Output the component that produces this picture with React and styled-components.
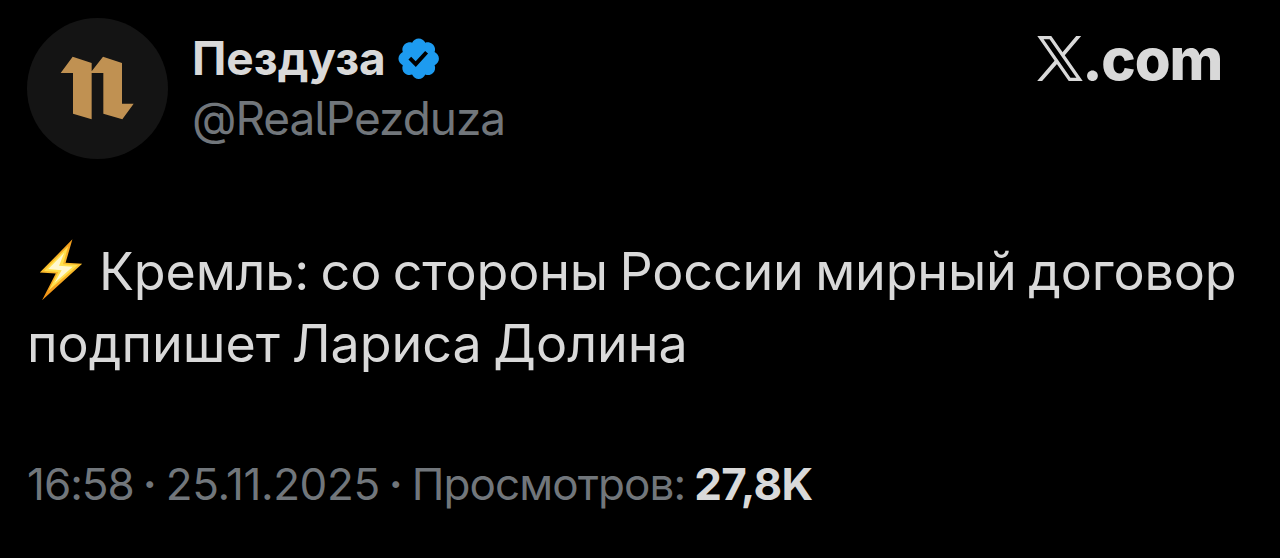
import React from "react";
import styled, { createGlobalStyle } from "styled-components";

const App = () => {
  return (
    <>
      <GlobalStyle />
      <StPost>
        <StHeader>
          <StAvatar>
            <AvatarLetter />
          </StAvatar>
          <StUser>
            <StNameRow>
              <StName>Пездуза</StName>
              <VerifiedBadge />
            </StNameRow>
            <StHandle>@RealPezduza</StHandle>
          </StUser>
          <StBrand>
            <XLogo />
            <StDomain>.com</StDomain>
          </StBrand>
        </StHeader>

        <StText>
          <StLine $spacing='-0.14px'>
            <Bolt />
            Кремль: со стороны России мирный договор
          </StLine>
          <StLine $spacing='0px'>подпишет Лариса Долина</StLine>
        </StText>

        <StMeta>
          <StMuted $spacing='-1px'>16:58</StMuted>
          <StDot>·</StDot>
          <StMuted $spacing='-0.4px'>25.11.2025</StMuted>
          <StDot>·</StDot>
          <StMuted $spacing='-0.9px'>Просмотров:</StMuted>
          <StViews>27,8K</StViews>
        </StMeta>
      </StPost>
    </>
  );
};

const AvatarLetter = () => (
  <StLetter viewBox='0 0 222 192'>
    <path
      fill='#c09152'
      d='M2 51 L38 2 L95 21 V46 L129 2 L186 21 V143 L221 143 L187 190 L130 173 V51 H95 V190 L39 173 V51 Z'
    />
  </StLetter>
);

const VerifiedBadge = () => (
  <StBadge viewBox='0 0 22 22'>
    <path
      fill='#1d9bf0'
      d='M20.396 11c-.018-.646-.215-1.275-.57-1.816-.354-.54-.852-.972-1.438-1.246.223-.607.27-1.264.14-1.897-.131-.634-.437-1.218-.882-1.687-.47-.445-1.053-.75-1.687-.882-.633-.13-1.29-.083-1.897.14-.273-.587-.704-1.086-1.245-1.44S11.647 1.62 11 1.604c-.646.017-1.273.213-1.813.568s-.969.854-1.24 1.44c-.608-.223-1.267-.272-1.902-.14-.635.13-1.22.436-1.69.882-.445.47-.749 1.055-.878 1.688-.13.633-.08 1.29.144 1.896-.587.274-1.087.705-1.443 1.245-.356.54-.555 1.17-.574 1.817.02.647.218 1.276.574 1.817.356.54.856.972 1.443 1.245-.224.606-.274 1.263-.144 1.896.13.634.433 1.218.877 1.688.47.443 1.054.747 1.687.878.633.132 1.29.084 1.897-.136.274.586.705 1.084 1.246 1.439.54.354 1.17.551 1.816.569.647-.016 1.276-.213 1.817-.567s.972-.854 1.245-1.44c.604.239 1.266.296 1.903.164.636-.132 1.22-.447 1.68-.907.46-.46.776-1.044.908-1.681s.075-1.299-.165-1.903c.586-.274 1.084-.705 1.439-1.246.354-.54.551-1.17.569-1.816zM9.662 14.85l-3.429-3.428 1.293-1.302 2.072 2.072 4.4-4.794 1.347 1.246z'
    />
  </StBadge>
);

const XLogo = () => (
  <StXLogo viewBox='0 0 138 136'>
    <path
      fill='none'
      stroke='#d9d9d9'
      strokeWidth='10'
      d='M10 5 H40 L128 131 H98 Z'
    />
    <path
      fill='#d9d9d9'
      d='M118 0 H133 L81 61 L74 52 Z M0 136 L55 72 L62 82 L15 136 Z'
    />
  </StXLogo>
);

const Bolt = () => (
  <StBolt viewBox='0 0 132 190'>
    <defs>
      <linearGradient id='bolt' x1='0' y1='0' x2='0' y2='1'>
        <stop offset='0' stopColor='#f39a1a' />
        <stop offset='0.45' stopColor='#fbc02d' />
        <stop offset='1' stopColor='#f08c12' />
      </linearGradient>
    </defs>
    <path fill='url(#bolt)' d='M101 1 L1 103 L50 106 L8 188 L131 76 L80 73 Z' />
    <path fill='#ffe14d' d='M88 22 L14 98 L58 101 L28 158 L118 80 L72 77 Z' />
    <path fill='#fff8cf' d='M76 42 L27 92 L68 96 L46 135 L102 85 L60 82 Z' />
  </StBolt>
);

export default App;

const GlobalStyle = createGlobalStyle`
  body {
    margin: 0;
    background: #000;
    font-family: Inter, "Liberation Sans", sans-serif;
  }
`;

const StPost = styled.div`
  height: 558px;
  padding: 18px 28px 0 27px;
  box-sizing: border-box;
  color: #d9d9d9;
  white-space: nowrap;
`;

const StHeader = styled.div`
  height: 217px;
  display: flex;
  align-items: flex-start;
`;

const StAvatar = styled.div`
  width: 141px;
  height: 141px;
  border-radius: 50%;
  background: #141414;
  display: flex;
  align-items: center;
  justify-content: center;
`;

const StLetter = styled.svg`
  width: 74px;
  height: 64px;
  margin: 0 2px 1px 0;
`;

const StUser = styled.div`
  margin-left: 24px;
  padding-top: 11px;
`;

const StNameRow = styled.div`
  height: 59px;
  display: flex;
  align-items: center;
`;

const StName = styled.div`
  font-size: 46px;
  font-weight: 700;
  line-height: 59px;
`;

const StBadge = styled.svg`
  width: 47.4px;
  height: 47.4px;
  margin-left: 9px;
`;

const StHandle = styled.div`
  color: #71767b;
  font-size: 46px;
  line-height: 60px;
  letter-spacing: -1.05px;
  font-feature-settings: "cv05";
`;

const StBrand = styled.div`
  margin-left: auto;
  margin-right: 30px;
  padding-top: 18px;
  display: flex;
`;

const StXLogo = styled.svg`
  width: 46px;
  height: 45px;
`;

const StDomain = styled.div`
  margin-left: -1px;
  font-size: 58px;
  font-weight: 800;
  line-height: 47px;
  letter-spacing: -1.2px;
`;

const StText = styled.div`
  font-size: 52px;
  line-height: 73px;
  word-spacing: -3px;
`;

const StLine = styled.div`
  height: 72px;
  display: flex;
  align-items: center;
  letter-spacing: ${(props) => props.$spacing};
`;

const StBolt = styled.svg`
  width: 44px;
  height: 62px;
  margin: 0 16px 3px 12px;
  flex-shrink: 0;
`;

const StMeta = styled.div`
  margin-top: 75px;
  display: flex;
  font-size: 44px;
  line-height: 60px;
`;

const StMuted = styled.div`
  color: #71767b;
  letter-spacing: ${(props) => props.$spacing};
`;

const StDot = styled.div`
  width: 32px;
  color: #71767b;
  font-weight: 600;
  text-align: center;
`;

const StViews = styled.div`
  margin-left: 9px;
  font-weight: 700;
  letter-spacing: -0.7px;
`;
